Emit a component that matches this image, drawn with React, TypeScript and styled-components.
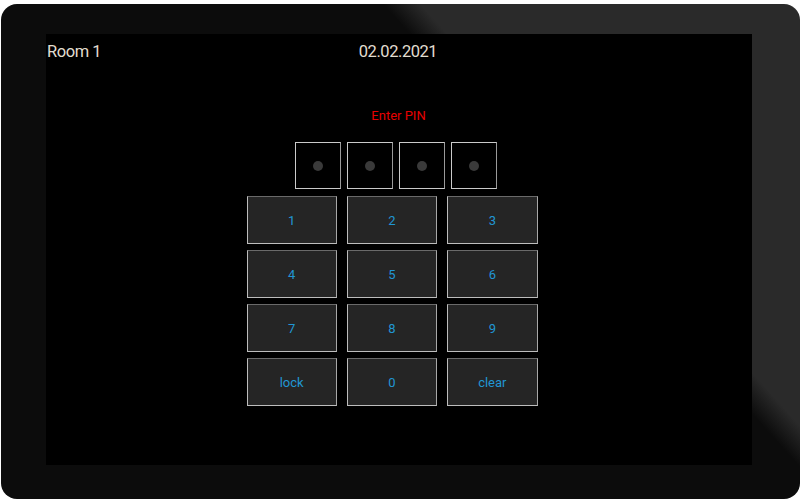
import React from 'react';
import styled, { createGlobalStyle } from 'styled-components';

const GlobalStyle = createGlobalStyle`
  html, body {
    margin: 0;
    padding: 0;
    background: #ffffff;
  }
  body {
    font-family: Roboto, "Noto Sans", sans-serif;
  }
`;

// tablet bezel around the screen
const Bezel = styled.div`
  box-sizing: border-box;
  width: 799px;
  height: 495px;
  margin: 4px 0 0 1px;
  padding: 30px 48px 34px 45px;
  border-radius: 16px;
  background: linear-gradient(48deg, #0c0c0c 66.5%, #2a2a2a 69.5%);
  display: flex;
`;

const Screen = styled.div`
  flex: 1;
  background: #000000;
  display: flex;
  flex-direction: column;
  align-items: center;
  padding: 8px 1px 0;
`;

const Header = styled.div`
  align-self: stretch;
  display: grid;
  grid-template-columns: 1fr auto 1fr;
  color: #e2ddd0;
  font-size: 16.5px;
  line-height: 20px;
  letter-spacing: -0.45px;
`;

const RoomName = styled.span`
  justify-self: start;
`;

const DateText = styled.span`
  justify-self: center;
  margin-right: 2px;
`;

const Prompt = styled.div`
  margin: 46px 1px 0 0;
  color: #e80000;
  font-size: 13px;
  line-height: 15px;
`;

const PinRow = styled.div`
  display: flex;
  gap: 6px;
  margin: 19px 6px 0 0;
`;

const PinBox = styled.div`
  box-sizing: border-box;
  width: 46px;
  height: 47px;
  border: 1px solid #cacaca;
  border-right-color: #9a9a9a;
  display: flex;
  align-items: center;
  justify-content: center;
`;

const PinDot = styled.span<{ $filled?: boolean }>`
  width: 10px;
  height: 10px;
  border-radius: 50%;
  background: ${(p) => (p.$filled ? '#2196d3' : '#3a3a3a')};
`;

const Keypad = styled.div`
  display: grid;
  grid-template-columns: repeat(3, 1fr);
  column-gap: 10px;
  row-gap: 6px;
  width: 291px;
  margin: 7px 14px 0 0;
`;

const Key = styled.button`
  box-sizing: border-box;
  height: 48px;
  padding: 0;
  background: #252525;
  border: 1px solid #bdbdbd;
  border-top-color: #6a6a6a;
  border-right-color: #a8a8a8;
  color: #2196d3;
  font-family: Roboto, "Noto Sans", sans-serif;
  font-size: 13px;
  cursor: pointer;
`;

const keys = ['1', '2', '3', '4', '5', '6', '7', '8', '9', 'lock', '0', 'clear'];

const App = () => {
  return (
    <>
      <GlobalStyle />
      <Bezel>
        <Screen>
          <Header>
            <RoomName>Room 1</RoomName>
            <DateText>02.02.2021</DateText>
            <span />
          </Header>
          <Prompt>Enter PIN</Prompt>
          <PinRow>
            {[0, 1, 2, 3].map((i) => (
              <PinBox key={i}>
                <PinDot />
              </PinBox>
            ))}
          </PinRow>
          <Keypad>
            {keys.map((k) => (
              <Key key={k}>{k}</Key>
            ))}
          </Keypad>
        </Screen>
      </Bezel>
    </>
  );
};

export default App;
